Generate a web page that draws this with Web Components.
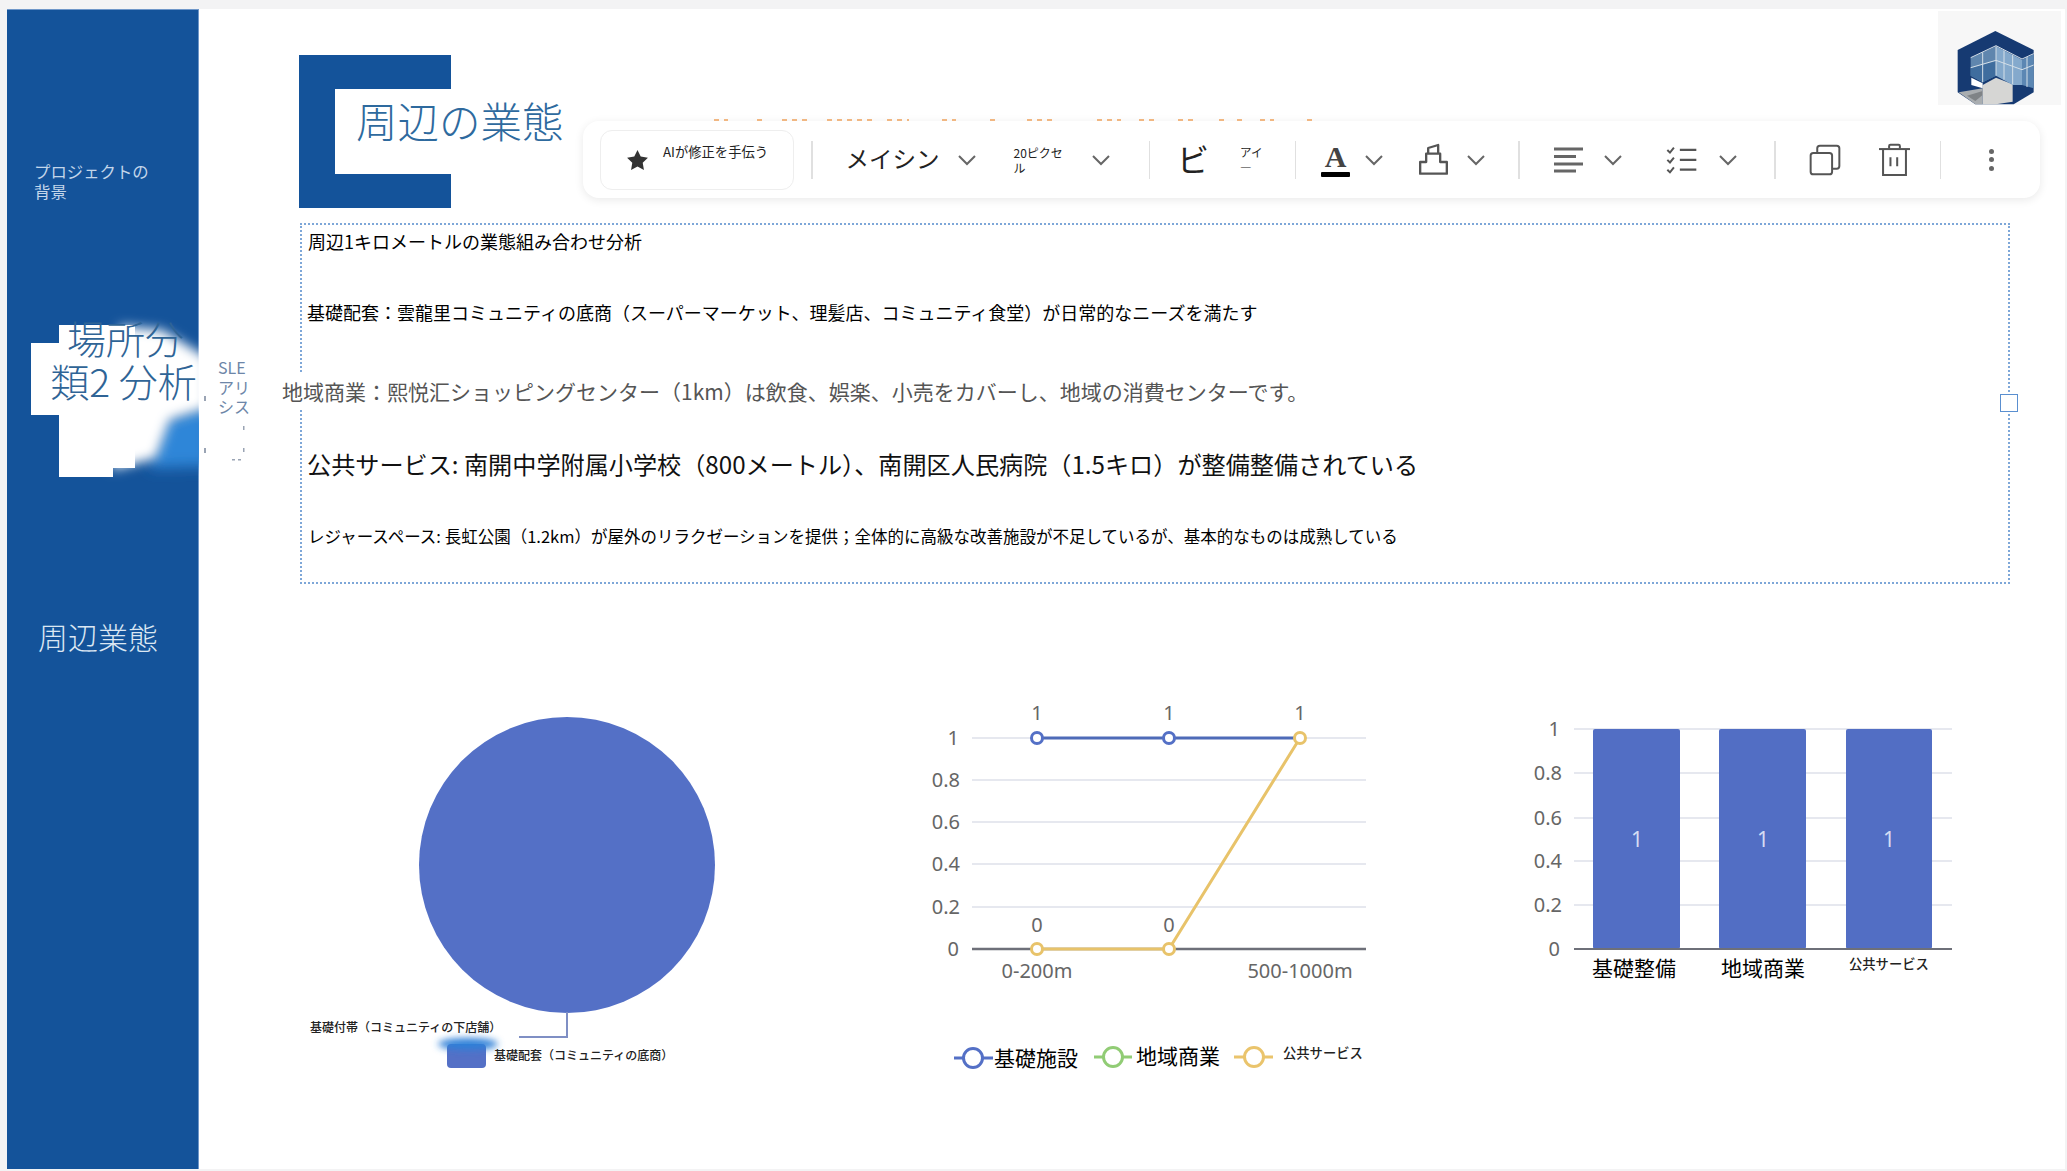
<!DOCTYPE html>
<html lang="ja">
<head>
<meta charset="utf-8">
<title>周辺の業態</title>
<style>
  html, body { margin: 0; padding: 0; height: 100%; overflow: hidden; background: #f3f3f4; }
  body { font-family: "Noto Sans CJK JP", "Noto Sans", sans-serif; }
</style>
</head>
<body>
<slide-page>
  <side-nav slot="nav">
    <nav-item kind="small">プロジェクトの背景</nav-item>
    <nav-active>場所分<br>類2 分析</nav-active>
    <nav-item kind="big">周辺業態</nav-item>
  </side-nav>
  <title-block slot="title">周辺の業態</title-block>
  <brand-logo slot="logo"></brand-logo>
  <text-box slot="body">
    <text-line style="--size:18px;--gap:-2px;--shift:1px">周辺1キロメートルの業態組み合わせ分析</text-line>
    <text-line style="--size:18px;--gap:35px">基礎配套：雲龍里コミュニティの底商（スーパーマーケット、理髪店、コミュニティ食堂）が日常的なニーズを満たす</text-line>
    <text-line style="--size:21px;--gap:43px;--shift:-25px;--color:#555;--bg:#fff">地域商業：熙悦汇ショッピングセンター（1km）は飲食、娯楽、小売をカバーし、地域の消費センターです。</text-line>
    <text-line style="--size:24.15px;--gap:37px;--color:#111">公共サービス: 南開中学附属小学校（800メートル）、南開区人民病院（1.5キロ）が整備整備されている</text-line>
    <text-line style="--size:16.5px;--gap:36px;--shift:1px">レジャースペース: 長虹公園（1.2km）が屋外のリラクゼーションを提供；全体的に高級な改善施設が不足しているが、基本的なものは成熟している</text-line>
  </text-box>
  <pie-chart slot="charts"></pie-chart>
  <line-chart slot="charts"></line-chart>
  <bar-chart slot="charts"></bar-chart>
  <float-toolbar slot="overlay"></float-toolbar>
</slide-page>

<script>
const define = (name, html) => {
  customElements.define(name, class extends HTMLElement {
    constructor() {
      super();
      this.attachShadow({ mode: "open" });
      this.shadowRoot.innerHTML = html;
    }
  });
};

define("slide-page", `
<style>
  :host {
    display: flex;
    position: relative;
    margin: 9px 2px 0 7px;
    height: 1160px;
    background: #fff;
    overflow: hidden;
  }
  .main { flex: 1; min-width: 0; padding: 2px 4px 0 100px; box-sizing: border-box; }
  .head { display: flex; justify-content: space-between; align-items: flex-start; height: 197px; }
  .charts { display: flex; margin-top: 116px; }
</style>
<slot name="nav"></slot>
<div class="main">
  <div class="head"><slot name="title"></slot><slot name="logo"></slot></div>
  <slot name="body"></slot>
  <div class="charts"><slot name="charts"></slot></div>
</div>
<slot name="overlay"></slot>
`);

define("side-nav", `
<style>
  :host {
    display: block;
    flex: none;
    width: 192px;
    height: 1160px;
    background: #14539a;
    box-shadow: inset -1px 0 0 #6f97c9, inset 0 1px 0 #6f97c9;
    position: relative;
    z-index: 1;
  }
</style>
<slot></slot>
`);

define("nav-item", `
<style>
  :host { display: block; color: #dbe7f3; }
  :host([kind="small"]) {
    font-size: 16.4px; line-height: 20px; width: 122px;
    margin: 152px 0 0 27px; color: #c3d6ea;
  }
  :host([kind="big"]) {
    font-size: 30px; line-height: 40px;
    margin: 138px 0 0 31px; font-weight: 300;
  }
</style>
<slot></slot>
`);

define("nav-active", `
<style>
  :host {
    display: block;
    position: relative;
    height: 160px;
    margin-top: 117px;
  }
  svg { position: absolute; left: 0; top: -8px; width: 260px; height: 180px; overflow: visible; }
  .label {
    position: relative;
    top: -2px;
    width: 155px;
    margin-left: 39px;
    font-size: 39px;
    line-height: 43px;
    font-weight: 300;
    text-indent: 4px;
    color: #2f6496;
    text-align: center;
    white-space: nowrap;
  }
  .stray {
    position: absolute;
    left: 211px;
    top: 40px;
    width: 36px;
    font-size: 16px;
    line-height: 19.5px;
    color: #6d86a8;
  }
</style>
<svg viewBox="7 310 260 180" aria-hidden="true">
  <defs>
    <filter id="soft" x="-30%" y="-30%" width="160%" height="160%"><feGaussianBlur stdDeviation="6"/></filter>
    <filter id="glow" x="-60%" y="-30%" width="220%" height="160%"><feGaussianBlur stdDeviation="7"/></filter>
    <clipPath id="edge"><rect x="7" y="310" width="192" height="180"/></clipPath>
  </defs>
  <g clip-path="url(#edge)">
    <polygon fill="#2f86d8" filter="url(#glow)" points="165,420 210,405 210,466 150,468"/>
    <polygon fill="#fff" filter="url(#soft)" points="120,326 162,330 208,358 208,408 170,420 156,458 112,470"/>
  </g>
  <path fill="#fff" d="M59 325H135V468H113V477H59V415H31V343H59Z"/>
  <g fill="#9aa4b4">
    <rect x="204" y="396" width="2" height="5"/><rect x="243" y="426" width="1.5" height="4"/>
    <rect x="204" y="448" width="2" height="5"/><rect x="243" y="448" width="1.5" height="4"/>
    <rect x="232" y="459" width="3" height="1.5"/><rect x="238" y="459" width="3" height="1.5"/>
  </g>
</svg>
<div class="label"><slot></slot></div>
<div class="stray">SLE アリ シス</div>
`);

define("title-block", `
<style>
  :host {
    display: flex;
    align-items: center;
    box-sizing: border-box;
    width: 152px;
    height: 153px;
    margin-top: 44px;
    border: solid #14539a;
    border-width: 34px 0 34px 36px;
    padding: 0 0 23px 21px;
    color: #2e6a9e;
    font-size: 41.5px;
    font-weight: 300;
    white-space: nowrap;
  }
</style>
<slot></slot>
`);

define("brand-logo", `
<style>
  :host { display: block; width: 123px; height: 94px; background: #f7f7f7; }
  svg { display: block; width: 123px; height: 94px; }
</style>
<svg viewBox="38 18 369 282" aria-hidden="true">
  <polygon fill="#163a72" points="210,78 325,135 325,262 265,298 150,298 97,262 97,135"/>
  <polygon fill="#a9adb0" points="100,262 172,250 172,298 150,298"/>
  <polygon fill="#7f8386" points="125,272 172,258 172,270 150,288"/>
  <polygon fill="#d6d6d4" points="172,240 212,218 262,238 262,290 212,298 172,298"/>
  <polygon fill="#fff" points="138,218 172,235 172,250 138,240"/>
  <polygon fill="#5f86ae" points="136,158 212,124 212,212 172,232 136,212"/>
  <polygon fill="#84a9cc" points="212,124 290,164 290,240 262,240 212,212"/>
  <polygon fill="#5c87b3" points="290,164 325,148 325,250 290,240"/>
  <polygon fill="#3f6d9e" points="136,190 212,168 212,212 172,232 136,212"/>
  <g stroke="#d4dfe8" stroke-width="3" fill="none">
    <path d="M136 158L212 122L290 162L325 146M212 124V212M172 142V232M136 188L212 166L290 194L325 180M236 136V224M262 150V238M305 156V246"/>
  </g>
</svg>
`);

define("text-box", `
<style>
  :host {
    display: block;
    position: relative;
    box-sizing: border-box;
    width: 1710px;
    height: 361px;
    margin: 15px 0 0 1px;
    border: 2px dotted #7ea7d8;
  }
  .handle {
    position: absolute;
    right: -10px;
    top: 169px;
    width: 18px;
    height: 18px;
    box-sizing: border-box;
    background: #fff;
    border: 1.5px solid #5a8fd0;
  }
</style>
<slot></slot>
<div class="handle"></div>
`);

define("text-line", `
<style>
  :host {
    display: block;
    width: max-content;
    height: 36px;
    line-height: 36px;
    white-space: nowrap;
    margin-top: var(--gap, 0);
    margin-left: calc(5px + var(--shift, 0px));
    font-size: var(--size);
    font-weight: var(--weight, 400);
    color: var(--color, #000);
    background: var(--bg, transparent);
  }
</style>
<slot></slot>
`);

const chartStyle = `
  svg { display: block; width: 100%; height: 400px; overflow: visible; }
  text { font-family: "Noto Sans", "Noto Sans CJK JP", sans-serif; fill: #666; font-size: 20px; }
  .ja { font-family: "Noto Sans CJK JP", sans-serif; fill: #000; font-size: 21px; }
  .tiny { font-family: "Noto Sans CJK JP", sans-serif; fill: #222; font-size: 13.3px; font-weight: 500; }
  .lead { font-family: "Noto Sans CJK JP", sans-serif; fill: #222; font-size: 12px; font-weight: 500; }
`;

define("pie-chart", `
<style>
  :host { display: block; flex: none; width: 601px; }
  ${chartStyle}
</style>
<svg viewBox="299 700 601 400">
  <defs><filter id="smear" x="-30%" y="-60%" width="160%" height="220%"><feGaussianBlur stdDeviation="3.5"/></filter></defs>
  <circle cx="567" cy="865" r="148" fill="#5470c6"/>
  <path d="M567 1012V1037H519" fill="none" stroke="#7f8fc4" stroke-width="2"/>
  <text class="lead" x="310" y="1032">基礎付帯（コミュニティの下店舗）</text>
  <rect x="447" y="1044" width="39" height="24" rx="4" fill="#5470c6"/>
  <ellipse cx="468" cy="1044" rx="30" ry="6" fill="#2f80d8" filter="url(#smear)"/>
  <text class="lead" x="494" y="1060">基礎配套（コミュニティの底商）</text>
</svg>
`);

define("line-chart", `
<style>
  :host { display: block; flex: none; width: 600px; }
  ${chartStyle}
  .grid { stroke: #e6e8ef; stroke-width: 2; }
  .y { text-anchor: end; }
  .m { text-anchor: middle; }
  .pt { fill: #fff; stroke-width: 3; }
</style>
<svg viewBox="900 700 600 400">
  <g class="grid"><path d="M972 738H1366M972 780H1366M972 822H1366M972 864H1366M972 907H1366"/></g>
  <path d="M972 949H1366" stroke="#6e7079" stroke-width="2.5"/>
  <g class="y">
    <text x="959" y="745">1</text><text x="960" y="787">0.8</text><text x="960" y="829">0.6</text>
    <text x="960" y="871">0.4</text><text x="960" y="914">0.2</text><text x="959" y="956">0</text>
  </g>
  <g class="m">
    <text x="1037" y="720">1</text><text x="1169" y="720">1</text><text x="1300" y="720">1</text>
    <text x="1037" y="932">0</text><text x="1169" y="932">0</text>
    <text x="1037" y="978">0-200m</text><text x="1300" y="978">500-1000m</text>
  </g>
  <path d="M1037 738H1300" fill="none" stroke="#4e6bb8" stroke-width="3"/>
  <circle class="pt" cx="1037" cy="738" r="5.5" stroke="#5470c6"/>
  <circle class="pt" cx="1169" cy="738" r="5.5" stroke="#5470c6"/>
  <path d="M1037 949H1169L1300 738" fill="none" stroke="#e8c36a" stroke-width="3"/>
  <circle class="pt" cx="1037" cy="949" r="5.5" stroke="#e8c36a"/>
  <circle class="pt" cx="1169" cy="949" r="5.5" stroke="#e8c36a"/>
  <circle class="pt" cx="1300" cy="738" r="5.5" stroke="#e8c36a"/>

  <path d="M954 1058H993" stroke="#5470c6" stroke-width="3"/>
  <circle cx="973" cy="1058" r="9.5" fill="#fff" stroke="#5470c6" stroke-width="3"/>
  <text class="ja" x="994" y="1066">基礎施設</text>
  <path d="M1094 1057H1132" stroke="#91cc75" stroke-width="3"/>
  <circle cx="1113" cy="1057" r="9.5" fill="#fff" stroke="#91cc75" stroke-width="3"/>
  <text class="ja" x="1136" y="1064">地域商業</text>
  <path d="M1234 1057H1273" stroke="#eac46c" stroke-width="3"/>
  <circle cx="1254" cy="1057" r="9.5" fill="#fff" stroke="#eac46c" stroke-width="3"/>
  <text class="tiny" x="1283" y="1058">公共サービス</text>
</svg>
`);

define("bar-chart", `
<style>
  :host { display: block; flex: none; width: 510px; }
  ${chartStyle}
  .y { text-anchor: end; }
  .bar { fill: #526ec4; }
  .val { fill: #d5ddf3; font-size: 21px; text-anchor: middle; }
</style>
<svg viewBox="1500 700 510 400">
  <path d="M1574 729H1952M1574 773H1952M1574 818H1952M1574 861H1952M1574 905H1952" stroke="#e6e8ef" stroke-width="2"/>
  <rect class="bar" x="1593" y="729" width="87" height="220" rx="2"/>
  <rect class="bar" x="1719" y="729" width="87" height="220" rx="2"/>
  <rect class="bar" x="1846" y="729" width="86" height="220" rx="2"/>
  <path d="M1574 949H1952" stroke="#6e7079" stroke-width="2"/>
  <g class="y">
    <text x="1560" y="736">1</text><text x="1562" y="780">0.8</text><text x="1562" y="825">0.6</text>
    <text x="1562" y="868">0.4</text><text x="1562" y="912">0.2</text><text x="1560" y="956">0</text>
  </g>
  <text class="val" x="1637" y="847">1</text><text class="val" x="1763" y="847">1</text><text class="val" x="1889" y="847">1</text>
  <text class="ja" x="1592" y="976">基礎整備</text>
  <text class="ja" x="1721" y="976">地域商業</text>
  <text class="tiny" x="1849" y="969">公共サービス</text>
</svg>
`);

const chevron = ml => `<svg class="i" style="margin-left:${ml}px" width="20" height="12" viewBox="0 0 20 12"><path d="M2 2L10 10L18 2" fill="none" stroke="#666" stroke-width="2"/></svg>`;
const sep = ml => `<div class="sep" style="margin-left:${ml}px"></div>`;

define("float-toolbar", `
<style>
  :host {
    display: flex;
    align-items: center;
    position: absolute;
    left: 576px;
    top: 112px;
    z-index: 2;
    box-sizing: border-box;
    width: 1457px;
    height: 77px;
    background: #fff;
    border-radius: 16px;
    box-shadow: 0 2px 10px rgba(0, 0, 0, 0.09);
    color: #222;
  }
  .peek { position: absolute; left: 129px; top: -4px; opacity: 0.8; }
  .i { display: block; flex: none; }
  .sep { flex: none; width: 1.5px; height: 38px; background: #e0e0e0; }
  .ai {
    display: flex;
    align-items: center;
    flex: none;
    box-sizing: border-box;
    width: 194px;
    height: 60px;
    margin-left: 17px;
    padding-left: 26px;
    border: 1px solid #eee;
    border-radius: 12px;
    font-size: 13.3px;
    white-space: nowrap;
  }
  .ai span { margin: -16px 0 0 15px; }
  .font { flex: none; font-size: 23.5px; margin-top: -3px; white-space: nowrap; }
  .small { flex: none; font-size: 12px; line-height: 15px; }
  .tiny { flex: none; font-size: 11.5px; line-height: 15px; }
  .bold { flex: none; font-size: 32px; line-height: 1; margin-top: -3px; }
  .color { flex: none; width: 29px; text-align: center; font-family: "Liberation Serif", serif; font-weight: 700; font-size: 30px; line-height: 28px; color: #444; }
  .color::after { content: ""; display: block; height: 5px; background: #000; border-radius: 1px; margin-top: 1px; }
  .dots { flex: none; display: grid; gap: 3.5px; margin-left: 48.3px; }
  .dots b { display: block; width: 5px; height: 5px; border-radius: 50%; background: #666; }
</style>
<svg class="peek" width="600" height="5" viewBox="0 0 600 5" aria-hidden="true">
  <path d="M2 3h14M45 3h6M70 3h28M115 3h48M175 3h22M230 3h14M278 3h6M315 3h28M385 3h24M427 3h16M466 3h20M507 3h6M525 3h6M548 3h14M595 3h5" stroke="#f0a765" stroke-width="2" stroke-dasharray="5 5" fill="none"/>
</svg>
<div class="ai">
  <svg class="i" width="21" height="20" viewBox="0 0 24 23"><path d="M12 0l3.700 7.600 8.300 1.200-6 5.900 1.400 8.300-7.400-3.900-7.400 3.900 1.400-8.300-6-5.900 8.300-1.200z" fill="#333"/></svg>
  <span>AIが修正を手伝う</span>
</div>
${sep(17)}
<div class="font" style="margin-left:33px">メイシン</div>
${chevron(17)}
<div class="small" style="margin-left:37px;width:50px">20ピクセル</div>
${chevron(27)}
${sep(38)}
<div class="bold" style="margin-left:27px">ビ</div>
<div class="tiny" style="margin-left:31px;width:24px">アイ<br>—</div>
${sep(30.7)}
<div class="color" style="margin-left:25px">A</div>
${chevron(14)}
<svg class="i" style="margin-left:33px" width="32" height="35" viewBox="355 40 95 105"><g fill="none" stroke="#555" stroke-width="7" stroke-linejoin="round"><path d="M364 135V100H382V75H424V100H444V135Z"/><path d="M388 75V58L418 49V75"/></g></svg>
${chevron(17)}
${sep(32)}
<svg class="i" style="margin-left:34px" width="29" height="26" viewBox="0 0 29 26"><path d="M0 2H29M0 9.500H22M0 17H29M0 24H22" stroke="#666" stroke-width="2.800"/></svg>
${chevron(20.7)}
<svg class="i" style="margin-left:41.7px" width="33" height="28" viewBox="80 60 100 85"><g fill="none" stroke="#555"><path d="M125 72H175M125 102H175M125 132H175" stroke-width="7"/><path d="M87 72L95 80L107 65M87 102L95 110L107 95M87 132L95 140L107 125" stroke-width="6"/></g></svg>
${chevron(19.7)}
${sep(36.7)}
<svg class="i" style="margin-left:33.3px" width="32" height="32" viewBox="510 55 97 97"><g fill="none" stroke="#555" stroke-width="6"><rect x="515" y="82" width="65" height="65" rx="8"/><path d="M535 82V68a8 8 0 0 1 8-8H594a8 8 0 0 1 8 8V122a8 8 0 0 1-8 8H580"/></g></svg>
<svg class="i" style="margin-left:35.3px" width="35" height="35" viewBox="712 50 104 104"><g fill="none" stroke="#555" stroke-width="6"><path d="M718 71H810"/><path d="M748 69V62a4 4 0 0 1 4-4H776a4 4 0 0 1 4 4V69"/><path d="M730 72V148H798V72"/><path d="M752 95V122M772 95V122"/></g></svg>
${sep(28)}
<div class="dots"><b></b><b></b><b></b></div>
`);
</script>
</body>
</html>
